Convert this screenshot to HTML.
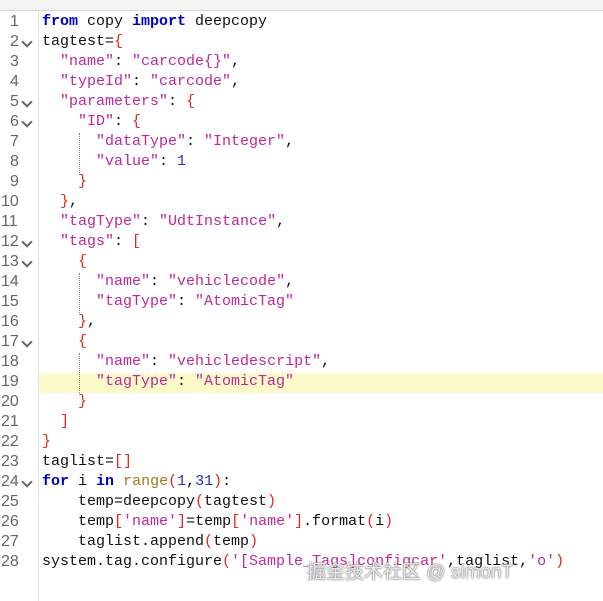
<!DOCTYPE html><html><head><style>
body{margin:0;width:603px;height:601px;overflow:hidden;background:#fff;font-family:"Liberation Mono",monospace;font-size:15px;}
.top{position:absolute;left:0;top:0;width:603px;height:10px;background:#f3f3f3;border-bottom:1px solid #d8d8d8}
.gut{position:absolute;left:38px;top:11px;width:1px;height:590px;background:#e3e3e3}
.ln{position:absolute;left:0;width:38px;height:20px;line-height:20px;color:#666;font-family:"Liberation Sans",sans-serif;font-size:16px}
.ln span.n{position:absolute;left:10px}
.ln span.f{position:absolute;left:23px;top:6px;width:6px;height:6px;border-right:2px solid #666;border-bottom:2px solid #666;transform:rotate(45deg)}
.c{position:absolute;left:42px;height:20px;line-height:20px;white-space:pre;color:#111}
.hl{position:absolute;left:39px;top:373px;width:564px;height:20px;background:#fbfac8}
.k{color:#0000cc;font-weight:bold}.s{color:#c0279a}.b{color:#e0281e}.r{color:#a07a1a}.num{color:#2d2dc8}
.g{position:absolute;width:0;border-left:1px dotted #888}
.wm{position:absolute;left:307px;top:556px;font-family:"Liberation Sans","Noto Sans CJK SC",sans-serif;font-size:19px;color:rgba(255,255,255,0.85);text-shadow:0 0 2px #777,0 0 1px #555}
#w{position:absolute;left:0;top:1px;width:603px;height:600px}
</style></head><body>
<div class="top"></div><div class="gut"></div><div class="hl"></div>
<div id="w">
<div class="g" style="left:79px;top:132px;height:40px"></div>
<div class="g" style="left:79px;top:272px;height:40px"></div>
<div class="g" style="left:79px;top:352px;height:40px"></div>
<div class="ln" style="top:11px"><span class="n">1</span></div>
<div class="ln" style="top:31px"><span class="n">2</span><span class="f"></span></div>
<div class="ln" style="top:51px"><span class="n">3</span></div>
<div class="ln" style="top:71px"><span class="n">4</span></div>
<div class="ln" style="top:91px"><span class="n">5</span><span class="f"></span></div>
<div class="ln" style="top:111px"><span class="n">6</span><span class="f"></span></div>
<div class="ln" style="top:131px"><span class="n">7</span></div>
<div class="ln" style="top:151px"><span class="n">8</span></div>
<div class="ln" style="top:171px"><span class="n">9</span></div>
<div class="ln" style="top:191px"><span class="n" style="left:1px">10</span></div>
<div class="ln" style="top:211px"><span class="n" style="left:1px">11</span></div>
<div class="ln" style="top:231px"><span class="n" style="left:1px">12</span><span class="f"></span></div>
<div class="ln" style="top:251px"><span class="n" style="left:1px">13</span><span class="f"></span></div>
<div class="ln" style="top:271px"><span class="n" style="left:1px">14</span></div>
<div class="ln" style="top:291px"><span class="n" style="left:1px">15</span></div>
<div class="ln" style="top:311px"><span class="n" style="left:1px">16</span></div>
<div class="ln" style="top:331px"><span class="n" style="left:1px">17</span><span class="f"></span></div>
<div class="ln" style="top:351px"><span class="n" style="left:1px">18</span></div>
<div class="ln" style="top:371px"><span class="n" style="left:1px">19</span></div>
<div class="ln" style="top:391px"><span class="n" style="left:1px">20</span></div>
<div class="ln" style="top:411px"><span class="n" style="left:1px">21</span></div>
<div class="ln" style="top:431px"><span class="n" style="left:1px">22</span></div>
<div class="ln" style="top:451px"><span class="n" style="left:1px">23</span></div>
<div class="ln" style="top:471px"><span class="n" style="left:1px">24</span><span class="f"></span></div>
<div class="ln" style="top:491px"><span class="n" style="left:1px">25</span></div>
<div class="ln" style="top:511px"><span class="n" style="left:1px">26</span></div>
<div class="ln" style="top:531px"><span class="n" style="left:1px">27</span></div>
<div class="ln" style="top:551px"><span class="n" style="left:1px">28</span></div>
<div class="c" style="top:11px"><span class="k">from</span> copy <span class="k">import</span> deepcopy</div>
<div class="c" style="top:31px">tagtest=<span class="b">{</span></div>
<div class="c" style="top:51px">  <span class="s">"name"</span>: <span class="s">"carcode{}"</span>,</div>
<div class="c" style="top:71px">  <span class="s">"typeId"</span>: <span class="s">"carcode"</span>,</div>
<div class="c" style="top:91px">  <span class="s">"parameters"</span>: <span class="b">{</span></div>
<div class="c" style="top:111px">    <span class="s">"ID"</span>: <span class="b">{</span></div>
<div class="c" style="top:131px">      <span class="s">"dataType"</span>: <span class="s">"Integer"</span>,</div>
<div class="c" style="top:151px">      <span class="s">"value"</span>: <span class="num">1</span></div>
<div class="c" style="top:171px">    <span class="b">}</span></div>
<div class="c" style="top:191px">  <span class="b">}</span>,</div>
<div class="c" style="top:211px">  <span class="s">"tagType"</span>: <span class="s">"UdtInstance"</span>,</div>
<div class="c" style="top:231px">  <span class="s">"tags"</span>: <span class="b">[</span></div>
<div class="c" style="top:251px">    <span class="b">{</span></div>
<div class="c" style="top:271px">      <span class="s">"name"</span>: <span class="s">"vehiclecode"</span>,</div>
<div class="c" style="top:291px">      <span class="s">"tagType"</span>: <span class="s">"AtomicTag"</span></div>
<div class="c" style="top:311px">    <span class="b">}</span>,</div>
<div class="c" style="top:331px">    <span class="b">{</span></div>
<div class="c" style="top:351px">      <span class="s">"name"</span>: <span class="s">"vehicledescript"</span>,</div>
<div class="c" style="top:371px">      <span class="s">"tagType"</span>: <span class="s">"AtomicTag"</span></div>
<div class="c" style="top:391px">    <span class="b">}</span></div>
<div class="c" style="top:411px">  <span class="b">]</span></div>
<div class="c" style="top:431px"><span class="b">}</span></div>
<div class="c" style="top:451px">taglist=<span class="b">[]</span></div>
<div class="c" style="top:471px"><span class="k">for</span> i <span class="k">in</span> <span class="r">range</span><span class="b">(</span><span class="num">1</span>,<span class="num">31</span><span class="b">)</span>:</div>
<div class="c" style="top:491px">    temp=deepcopy<span class="b">(</span>tagtest<span class="b">)</span></div>
<div class="c" style="top:511px">    temp<span class="b">[</span><span class="s">'name'</span><span class="b">]</span>=temp<span class="b">[</span><span class="s">'name'</span><span class="b">]</span>.format<span class="b">(</span>i<span class="b">)</span></div>
<div class="c" style="top:531px">    taglist.append<span class="b">(</span>temp<span class="b">)</span></div>
<div class="c" style="top:551px">system.tag.configure<span class="b">(</span><span class="s">'[Sample_Tags]configcar'</span>,taglist,<span class="s">'o'</span><span class="b">)</span></div>
<div class="wm">掘金技术社区 @ simonT</div>
</div>
</body></html>
